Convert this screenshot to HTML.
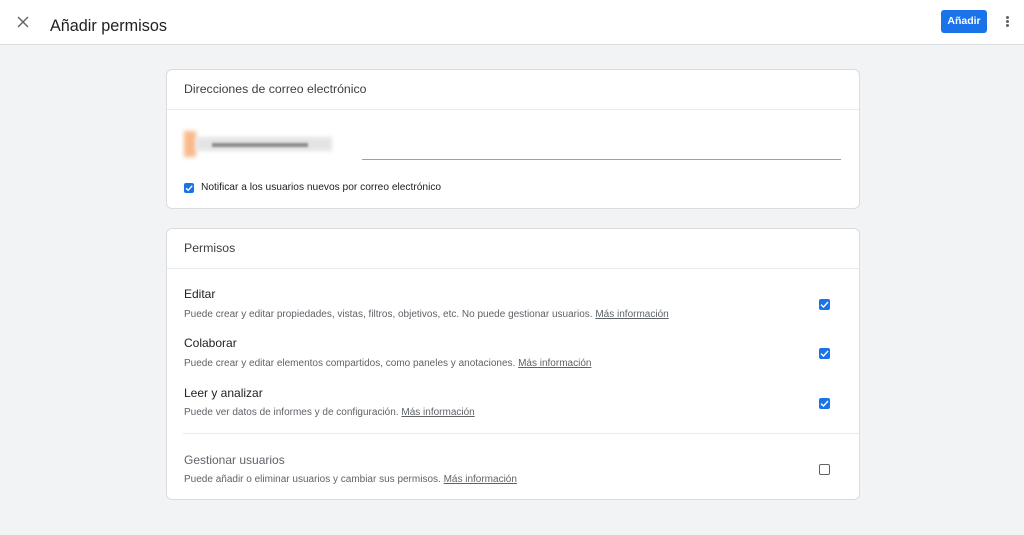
<!DOCTYPE html><html><head><meta charset="utf-8"><style>
body{margin:0;width:1024px;height:535px;background:#f1f3f4;font-family:"Liberation Sans",Arial,sans-serif;position:relative;overflow:hidden;color:#202124}
.abs{position:absolute}
.hdr{left:0;top:0;width:1024px;height:44px;background:#fff;border-bottom:1px solid #dadce0}
.card{left:166px;width:692px;background:#fff;border:1px solid #dadce0;border-radius:6px}
.ch{height:39px;border-bottom:1px solid #e8eaed;font-size:12.3px;line-height:39px;padding-left:17px;color:#3c4043}
.t{font-size:12px;color:#202124}
.d{font-size:10px;color:#5f6368}
.d u{color:#5f6368}
.cb{width:10px;height:10px;border-radius:2px;background:#1a73e8}
.cb svg{display:block}
.ub{width:9px;height:9px;border:1.5px solid #5f6368;border-radius:2px}
</style></head><body>
<div class="abs hdr"></div>
<svg class="abs" style="left:17px;top:16px" width="12" height="12"><path d="M1 1L11 11M11 1L1 11" stroke="#5f6368" stroke-width="1.4"/></svg>
<div class="abs" style="left:50px;top:17px;font-size:16.2px;color:#202124">Añadir permisos</div>
<div class="abs" style="left:941px;top:10px;width:46px;height:23px;background:#1a73e8;border-radius:3px;color:#fff;font-size:10.5px;font-weight:bold;text-align:center;line-height:23px">Añadir</div>
<div class="abs" style="left:1006px;top:16px;width:3px;height:3px;border-radius:50%;background:#5f6368;box-shadow:0 4px 0 #5f6368,0 8px 0 #5f6368"></div>

<div class="abs card" style="top:69px;height:138px"><div class="ch">Direcciones de correo electrónico</div></div>
<div class="abs" style="left:184px;top:131px;width:12px;height:26px;background:#f9b98a;filter:blur(2px)"></div>
<div class="abs" style="left:196px;top:137px;width:136px;height:14px;background:#e4e4e4;filter:blur(2px)"></div>
<div class="abs" style="left:212px;top:143px;width:96px;height:4px;background:#8a8a8a;filter:blur(1px)"></div>
<div class="abs" style="left:362px;top:159px;width:479px;height:1px;background:#9aa0a6"></div>
<div class="abs cb" style="left:184px;top:183px"><svg width="10" height="10"><path d="M2 5.2L4.2 7.3L8.2 2.8" stroke="#fff" stroke-width="1.4" fill="none"/></svg></div>
<div class="abs" style="left:201px;top:182px;font-size:10.2px;color:#202124">Notificar a los usuarios nuevos por correo electrónico</div>

<div class="abs card" style="top:228px;height:270px"><div class="ch">Permisos</div></div>
<div class="abs t" style="left:184px;top:287px">Editar</div>
<div class="abs d" style="left:184px;top:309px">Puede crear y editar propiedades, vistas, filtros, objetivos, etc. No puede gestionar usuarios. <u>Más información</u></div>
<div class="abs t" style="left:184px;top:336px">Colaborar</div>
<div class="abs d" style="left:184px;top:358px">Puede crear y editar elementos compartidos, como paneles y anotaciones. <u>Más información</u></div>
<div class="abs t" style="left:184px;top:386px">Leer y analizar</div>
<div class="abs d" style="left:184px;top:407px">Puede ver datos de informes y de configuración. <u>Más información</u></div>
<div class="abs" style="left:183px;top:433px;width:676px;height:1px;background:#e8eaed"></div>
<div class="abs t" style="left:184px;top:453px;color:#5f6368">Gestionar usuarios</div>
<div class="abs d" style="left:184px;top:474px">Puede añadir o eliminar usuarios y cambiar sus permisos. <u>Más información</u></div>
<div class="abs cb" style="left:819px;top:299px;width:11px;height:11px"><svg width="11" height="11"><path d="M2 5.6L4.5 8L9 3" stroke="#fff" stroke-width="1.4" fill="none"/></svg></div>
<div class="abs cb" style="left:819px;top:348px;width:11px;height:11px"><svg width="11" height="11"><path d="M2 5.6L4.5 8L9 3" stroke="#fff" stroke-width="1.4" fill="none"/></svg></div>
<div class="abs cb" style="left:819px;top:398px;width:11px;height:11px"><svg width="11" height="11"><path d="M2 5.6L4.5 8L9 3" stroke="#fff" stroke-width="1.4" fill="none"/></svg></div>
<div class="abs ub" style="left:819px;top:464px"></div>
</body></html>
